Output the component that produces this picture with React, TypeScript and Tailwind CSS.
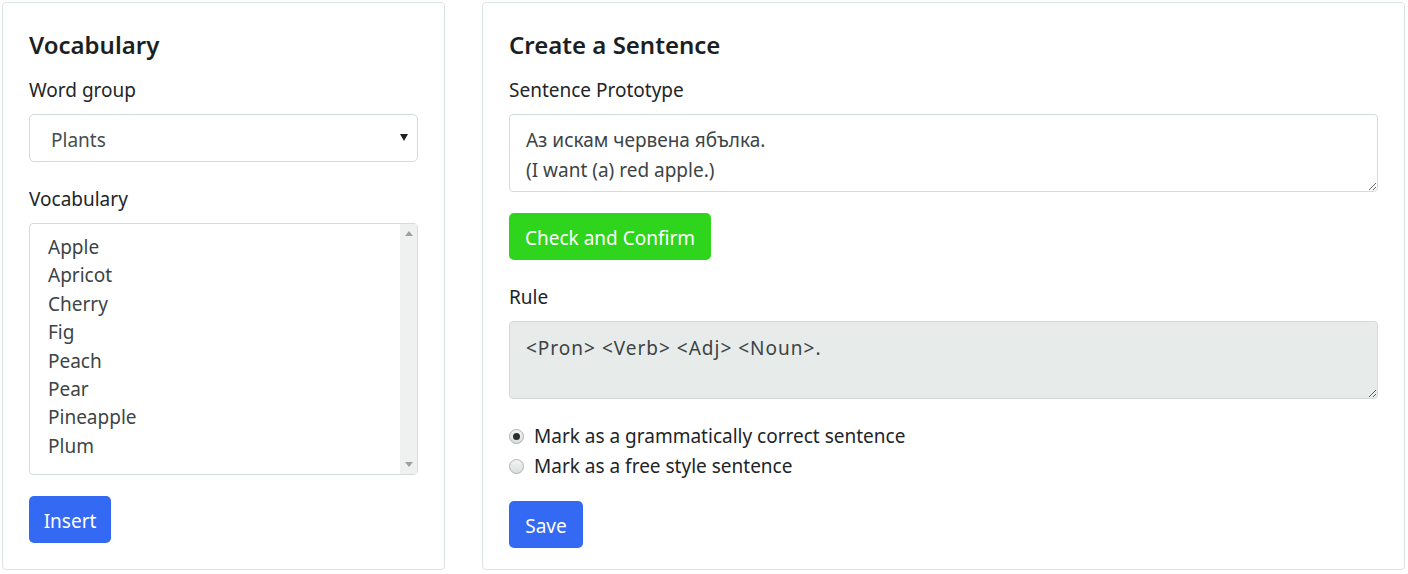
import React from 'react';

const fruits = ['Apple', 'Apricot', 'Cherry', 'Fig', 'Peach', 'Pear', 'Pineapple', 'Plum'];

const Radio = ({ checked }: { checked?: boolean }) => (
  <span className="w-[15px] h-[15px] rounded-full border border-[#aab3b0] bg-gradient-to-b from-[#f3f5f4] to-[#d9dedc] flex items-center justify-center shrink-0">
    {checked && <span className="w-[7px] h-[7px] rounded-full bg-[#2b2f2e]" />}
  </span>
);

const VocabularyCard = () => (
  <div className="w-[443px] h-[568px] shrink-0 border border-[#dde5e2] rounded-[4px] px-[26px] pt-[26px] flex flex-col">
    <h2 className="text-[24px] leading-[32px] font-semibold text-[#1c1f21]">Vocabulary</h2>
    <label className="mt-[15px] text-[19px] leading-[28px] text-[#212529]">Word group</label>
    <div className="mt-[10px] h-[48px] border border-[#d3dcd9] rounded-[5px] flex items-center justify-between pl-[21px] pr-[9px]">
      <span className="text-[19px] text-[#454d4f] pt-[4px]">Plants</span>
      <svg width="8" height="7" viewBox="0 0 8 7" className="mt-[-2px]">
        <path d="M0 0 H8 L4 7 Z" fill="#222" />
      </svg>
    </div>
    <label className="mt-[23px] text-[19px] leading-[28px] text-[#212529]">Vocabulary</label>
    <div className="mt-[10px] h-[252px] border border-[#d3dcd9] rounded-[4px] flex">
      <ul className="flex-1 pl-[18px] pt-[9px]">
        {fruits.map(f => (
          <li key={f} className="text-[19px] leading-[28.4px] text-[#3c4446]">{f}</li>
        ))}
      </ul>
      <div className="w-[17px] bg-[#eef1f0] flex flex-col items-center justify-between py-[7px]">
        <svg width="8" height="5" viewBox="0 0 8 5"><path d="M0 5 H8 L4 0 Z" fill="#9aa29f" /></svg>
        <svg width="8" height="5" viewBox="0 0 8 5"><path d="M0 0 H8 L4 5 Z" fill="#9aa29f" /></svg>
      </div>
    </div>
    <button className="mt-[21px] self-start h-[47px] w-[82px] rounded-[5px] bg-[#3469f4] text-white text-[19px] pt-[3px]">
      Insert
    </button>
  </div>
);

const SentenceCard = () => (
  <div className="flex-1 h-[568px] border border-[#dde5e2] rounded-[4px] px-[26px] pt-[26px] flex flex-col">
    <h2 className="text-[24px] leading-[32px] font-semibold text-[#1c1f21]">Create a Sentence</h2>
    <label className="mt-[15px] text-[19px] leading-[28px] text-[#212529]">Sentence Prototype</label>
    <textarea
      readOnly
      value={'Аз искам червена ябълка.\n(I want (a) red apple.)'}
      className="mt-[10px] h-[78px] border border-[#d3dcd9] rounded-[4px] pl-[16px] pt-[10px] text-[19px] leading-[30px] text-[#3c4446] outline-none"
    />
    <button className="mt-[21px] self-start h-[47px] w-[202px] rounded-[5px] bg-[#2fd51c] text-white text-[19px] pt-[3px]">
      Check and Confirm
    </button>
    <label className="mt-[23px] text-[19px] leading-[28px] text-[#212529]">Rule</label>
    <textarea
      readOnly
      value="<Pron> <Verb> <Adj> <Noun>."
      className="mt-[10px] h-[78px] border border-[#d3dcd9] rounded-[4px] bg-[#e7ebe9] pl-[16px] pt-[11px] text-[19px] leading-[30px] tracking-[1px] text-[#3c4446] outline-none"
    />
    <div className="mt-[22px] flex flex-col">
      <div className="flex items-center gap-[10px] h-[30px]">
        <Radio checked />
        <span className="text-[19px] text-[#212529]">Mark as a grammatically correct sentence</span>
      </div>
      <div className="flex items-center gap-[10px] h-[30px]">
        <Radio />
        <span className="text-[19px] text-[#212529]">Mark as a free style sentence</span>
      </div>
    </div>
    <button className="mt-[20px] self-start h-[47px] w-[74px] rounded-[5px] bg-[#3469f4] text-white text-[19px] pt-[3px]">
      Save
    </button>
  </div>
);

export default function App() {
  return (
    <div className="w-[1408px] h-[574px] bg-white p-[2px] pr-[3px] flex gap-[37px] font-['Noto_Sans',sans-serif]">
      <VocabularyCard />
      <SentenceCard />
    </div>
  );
}
